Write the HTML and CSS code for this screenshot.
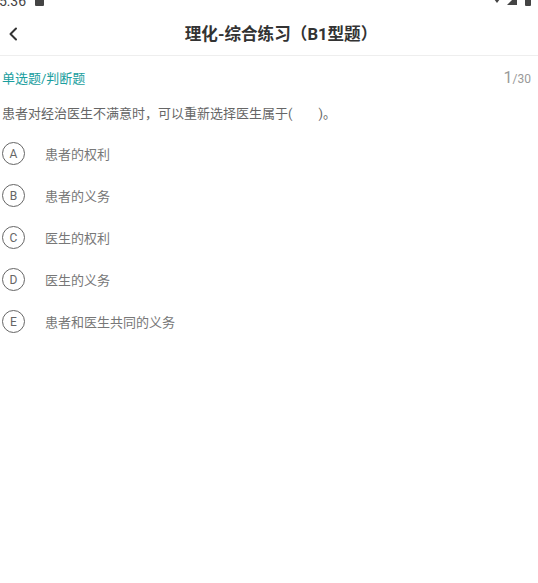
FILE: index.html
```html
<!DOCTYPE html>
<html lang="zh-CN">
<head>
  <meta charset="UTF-8">
  <title>理化-综合练习（B1型题）</title>
  <link rel="stylesheet" href="styles.css">
</head>
<body>
  <div class="status-bar">
    <div class="status-left">
      <span class="clock">5:36</span>
      <span class="notice"></span>
    </div>
    <div class="status-right">
      <svg width="12" height="10" viewBox="0 0 12 10"><path d="M0 0 L12 0 L6 8 Z" fill="#444"/></svg>
      <svg width="10" height="10" viewBox="0 0 10 10"><path d="M10 0 L10 10 L0 10 Z" fill="#444"/></svg>
      <span class="battery"></span>
    </div>
  </div>

  <header class="nav">
    <button class="back" aria-label="返回">
      <svg width="10" height="14" viewBox="0 0 10 14"><path d="M8 1.5 L2.5 7 L8 12.5" fill="none" stroke="#333" stroke-width="2" stroke-linecap="round" stroke-linejoin="round"/></svg>
    </button>
    <h1>理化-综合练习（B1型题）</h1>
  </header>

  <main class="quiz">
    <div class="quiz-head">
      <span class="type">单选题/判断题</span>
      <span class="progress"><b>1</b>/30</span>
    </div>

    <p class="question">患者对经治医生不满意时，可以重新选择医生属于(　　)。</p>

    <ul class="options">
      <li><span class="mark">A</span>患者的权利</li>
      <li><span class="mark">B</span>患者的义务</li>
      <li><span class="mark">C</span>医生的权利</li>
      <li><span class="mark">D</span>医生的义务</li>
      <li><span class="mark">E</span>患者和医生共同的义务</li>
    </ul>
  </main>
</body>
</html>
```

FILE: styles.css
```css
:root {
  --teal: #1a9e9e;
  --text: #333;
  --muted: #777;
  --line: #eeeeee;
}

* {
  box-sizing: border-box;
}

body {
  margin: 0;
  background: #fff;
  font-family: Roboto, "Noto Sans CJK SC", sans-serif;
  color: var(--text);
}

/* status bar, scrolled mostly off the top */
.status-bar {
  height: 6px;
  overflow: hidden;
  display: flex;
  justify-content: space-between;
  align-items: flex-end;
  padding: 0 7px 0 0;
}

.status-left,
.status-right {
  display: flex;
  align-items: flex-end;
  gap: 6px;
  line-height: 1;
}

.clock {
  font-size: 14px;
  color: #444;
  margin-bottom: -2px;
  margin-left: -1px;
}

.notice {
  width: 9px;
  height: 9px;
  margin-left: 3px;
  background: #444;
  border-radius: 1px;
}

.status-right {
  gap: 4px;
}

.status-right svg {
  display: block;
  margin-bottom: 1px;
}

.battery {
  width: 6px;
  height: 10px;
  margin-left: 4px;
  background: #444;
  border-radius: 1px;
}

/* title bar */
.nav {
  height: 50px;
  position: relative;
  display: flex;
  align-items: center;
  justify-content: center;
  border-bottom: 1px solid var(--line);
}

.back {
  position: absolute;
  left: 6px;
  top: 20px;
  padding: 0;
  border: none;
  background: none;
  width: 14px;
  height: 16px;
  display: flex;
  align-items: center;
  justify-content: center;
}

.nav h1 {
  margin: 4px 0 0 24px;
  font-size: 16.6px;
  font-weight: bold;
  color: #333;
}

/* question area */
.quiz {
  padding: 0 7px 0 2px;
}

.quiz-head {
  display: flex;
  justify-content: space-between;
  align-items: baseline;
  margin-top: 12px;
  height: 20px;
}

.type {
  font-size: 13px;
  color: var(--teal);
}

.progress {
  color: #999;
  font-size: 12px;
}

.progress b {
  font-weight: normal;
  font-size: 16px;
}

.question {
  margin: 17px 0 0;
  font-size: 13px;
  line-height: 18px;
  color: #666;
}

.options {
  list-style: none;
  margin: 19px 0 0;
  padding: 0;
  display: flex;
  flex-direction: column;
  gap: 19px;
}

.options li {
  display: flex;
  align-items: center;
  height: 23px;
  font-size: 13px;
  color: var(--muted);
}

.mark {
  width: 23px;
  height: 23px;
  border: 1.3px solid #666;
  border-radius: 50%;
  display: flex;
  align-items: center;
  justify-content: center;
  font-size: 12px;
  color: #666;
  margin-right: 20px;
  flex-shrink: 0;
}
```
